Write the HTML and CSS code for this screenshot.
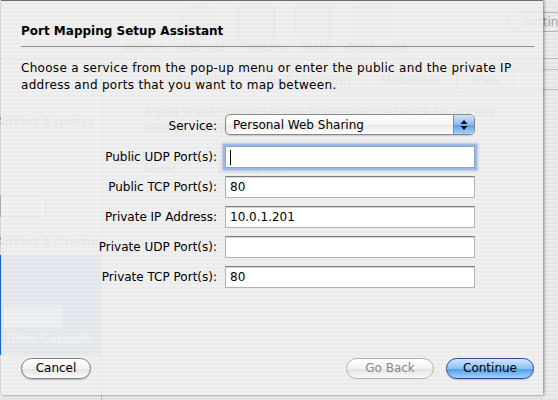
FILE: index.html
```html
<!DOCTYPE html>
<html lang="en">
  <head>
    <meta charset="UTF-8" />
    <meta name="viewport" content="width=device-width, initial-scale=1.0" />
    <title>Port Mapping Setup Assistant</title>
    <link rel="stylesheet" href="styles.css">
  </head>
  <body>
    <!-- the AirPort Utility window underneath the sheet -->
    <div class="window">
      <div class="toolbar">
        <div class="tool-icons">
          <span class="tool-icon round"></span>
          <span class="tool-icon"></span>
          <span class="tool-icon"></span>
          <span class="tool-icon"></span>
        </div>
        <div class="tool-labels">
          <span>AirPort</span><span>Internet</span><span>Printers</span><span>Disks</span><span>Advanced</span>
        </div>
        <div class="search">Settin</div>
      </div>
      <div class="window-body">
        <div class="sidebar">
          <div class="device">AirPort Express</div>
          <div class="device-box"></div>
          <div class="device">AirPort Extreme</div>
          <div class="device selected">
            <div class="device-box light"></div>
            <span>Time Capsule</span>
          </div>
        </div>
        <div class="pane">
          <div class="tabs">
            <span>Statistics</span><span>Port Mapping</span><span>MobileMe</span><span>IPv6</span>
          </div>
          <p class="pane-text">If you want computers outside your network to access specific devices on your network, enter the port.</p>
          <div class="table-head"><span>Allow:</span><span>Description</span></div>
        </div>
      </div>
    </div>

    <div class="sheet">
      <h1 class="sheet-title">Port Mapping Setup Assistant</h1>
      <p class="intro">Choose a service from the pop-up menu or enter the public and the private IP address and ports that you want to map between.</p>

      <div class="form">
        <label class="form-label">Service:</label>
        <div class="popup">
          <span class="popup-value">Personal Web Sharing</span>
          <span class="popup-arrows">
            <svg width="8" height="12" viewBox="0 0 8 12">
              <path d="M4 1 L7.5 5 H0.5 Z" fill="#111" />
              <path d="M4 11 L7.5 7 H0.5 Z" fill="#111" />
            </svg>
          </span>
        </div>

        <label class="form-label">Public UDP Port(s):</label>
        <div class="field focused"><span class="caret"></span></div>

        <label class="form-label">Public TCP Port(s):</label>
        <div class="field">80</div>

        <label class="form-label">Private IP Address:</label>
        <div class="field">10.0.1.201</div>

        <label class="form-label">Private UDP Port(s):</label>
        <div class="field"></div>

        <label class="form-label">Private TCP Port(s):</label>
        <div class="field">80</div>
      </div>

      <div class="buttons">
        <button class="btn">Cancel</button>
        <div class="buttons-right">
          <button class="btn back" disabled>Go Back</button>
          <button class="btn default">Continue</button>
        </div>
      </div>
    </div>
  </body>
</html>
```

FILE: styles.css
```css
body {
  margin: 0;
  width: 558px;
  height: 400px;
  overflow: hidden;
  position: relative;
  font-family: "DejaVu Sans", sans-serif;
  font-size: 12px;
  color: #000;
  background-color: #e6e6e6;
}

/* window under the sheet */
.window {
  height: 400px;
  overflow: hidden;
  display: flex;
  flex-direction: column;
  color: #a2a2a2;
  background: repeating-linear-gradient(to bottom, #ececec 0 2px, #e4e4e4 2px 4px);
}

.toolbar {
  height: 58px;
  flex-shrink: 0;
  position: relative;
  border-bottom: 1px solid #bcbcbc;
}

.tool-icons {
  display: flex;
  gap: 18px;
  padding: 4px 0 0 178px;
}

.tool-icon {
  width: 40px;
  height: 36px;
  border-radius: 6px;
  background-color: #d2d2d2;
}

.tool-icon.round {
  border-radius: 50%;
}

.tool-labels {
  display: flex;
  gap: 14px;
  padding-left: 124px;
  white-space: nowrap;
}

.search {
  position: absolute;
  top: 12px;
  left: 508px;
  width: 40px;
  height: 18px;
  border: 1px solid #b4b4b4;
  border-radius: 9px;
  padding-left: 14px;
  line-height: 18px;
  overflow: hidden;
}

.window-body {
  flex: 1;
  display: flex;
}

.sidebar {
  width: 101px;
  flex-shrink: 0;
  border-right: 1px solid #c0c0c0;
  padding-top: 54px;
  overflow: hidden;
}

.device {
  height: 18px;
  line-height: 18px;
  font-size: 13px;
  margin-left: -4px;
  white-space: nowrap;
}

.device-box {
  height: 20px;
  width: 44px;
  margin: 64px 0 16px;
  border: 1px solid #b8b8b8;
  background-color: #f4f4f4;
}

.device.selected {
  margin: 4px 0 0;
  height: 100px;
  box-sizing: border-box;
  padding: 52px 0 0 2px;
  color: #fff;
  background-color: #a9c6ea;
  border-left: 2px solid #1f6fd8;
}

.device-box.light {
  margin: 0 0 2px;
  width: 58px;
  border: none;
  background-color: #e4ecf6;
}

.pane {
  flex: 1;
  padding: 10px 0 0 40px;
  white-space: nowrap;
  overflow: hidden;
}

.tabs {
  display: flex;
  border: 1px solid #c0c0c0;
  border-radius: 4px;
  width: 420px;
  margin-left: 20px;
}

.tabs span {
  padding: 2px 14px;
  border-right: 1px solid #c0c0c0;
  font-size: 13px;
}

.pane-text {
  margin: 14px 0 0;
  width: 400px;
  white-space: normal;
  font-size: 13px;
  line-height: 16px;
}

.table-head {
  display: flex;
  gap: 40px;
  margin-top: 26px;
}

/* the sheet */
.sheet {
  position: absolute;
  left: 1px;
  top: 0;
  width: 542px;
  height: 395px;
  box-sizing: border-box;
  padding: 0 9px 16px 20px;
  display: flex;
  flex-direction: column;
  border-top: 1px solid #6e6e6e;
  background: repeating-linear-gradient(to bottom, rgba(241, 241, 241, 0.86) 0 2px, rgba(236, 236, 236, 0.86) 2px 4px);
  box-shadow: 1px 0 3px rgba(0, 0, 0, 0.45);
}

.sheet-title {
  margin: 22px 0 0;
  padding-bottom: 7px;
  font-size: 12px;
  font-weight: bold;
  line-height: 16px;
  border-bottom: 1px solid #8e8e8e;
}

.intro {
  margin: 13px 0 0;
  line-height: 17px;
  letter-spacing: 0.3px;
}

.form {
  display: grid;
  grid-template-columns: 196px 250px;
  column-gap: 8px;
  row-gap: 8px;
  margin-top: 20px;
  align-items: center;
}

.form-label {
  text-align: right;
}

.popup {
  height: 21px;
  box-sizing: border-box;
  display: flex;
  align-items: center;
  margin-bottom: 3px;
  border: 1px solid #8a8a8a;
  border-radius: 5px;
  background: linear-gradient(#ffffff, #f6f6f6 50%, #e8e8e8 51%, #fdfdfd);
  box-shadow: 0 1px 1px rgba(0, 0, 0, 0.15);
  overflow: hidden;
}

.popup-value {
  flex: 1;
  padding-left: 7px;
}

.popup-arrows {
  width: 20px;
  height: 100%;
  display: flex;
  align-items: center;
  justify-content: center;
  border-left: 1px solid #6c8fc2;
  background: linear-gradient(#cfe3fb, #8cbcf1 50%, #5a9be8 51%, #a7d3ff);
}

.field {
  height: 22px;
  box-sizing: border-box;
  padding: 0 4px;
  line-height: 20px;
  background-color: #fff;
  border: 1px solid #b3b3b3;
  border-top-color: #7c7c7c;
  box-shadow: inset 0 1px 0 #d8d8d8;
  display: flex;
  align-items: center;
}

.field.focused {
  border-color: #8da7c8;
  box-shadow: 0 0 0 2px #9dbbe2, 0 0 2px 3px rgba(120, 160, 220, 0.5);
}

.caret {
  width: 1px;
  height: 15px;
  background-color: #000;
}

.buttons {
  margin-top: auto;
  display: flex;
  justify-content: space-between;
}

.buttons-right {
  display: flex;
  gap: 12px;
}

.btn {
  width: 70px;
  height: 21px;
  padding: 0;
  font-family: inherit;
  font-size: 12px;
  line-height: 19px;
  color: #000;
  border: 1px solid #7d7d7d;
  border-radius: 11px;
  background: linear-gradient(#ffffff, #f3f3f3 50%, #e2e2e2 51%, #fafafa);
  box-shadow: 0 1px 1px rgba(0, 0, 0, 0.2);
}

.btn.back {
  width: 88px;
  color: #8a8a8a;
  border-color: #b0b0b0;
  box-shadow: none;
}

.btn.default {
  width: 88px;
  border-color: #37469a;
  background: linear-gradient(#cfe6ff, #8dc2f6 50%, #4e9bea 51%, #9fd4ff);
}
```
